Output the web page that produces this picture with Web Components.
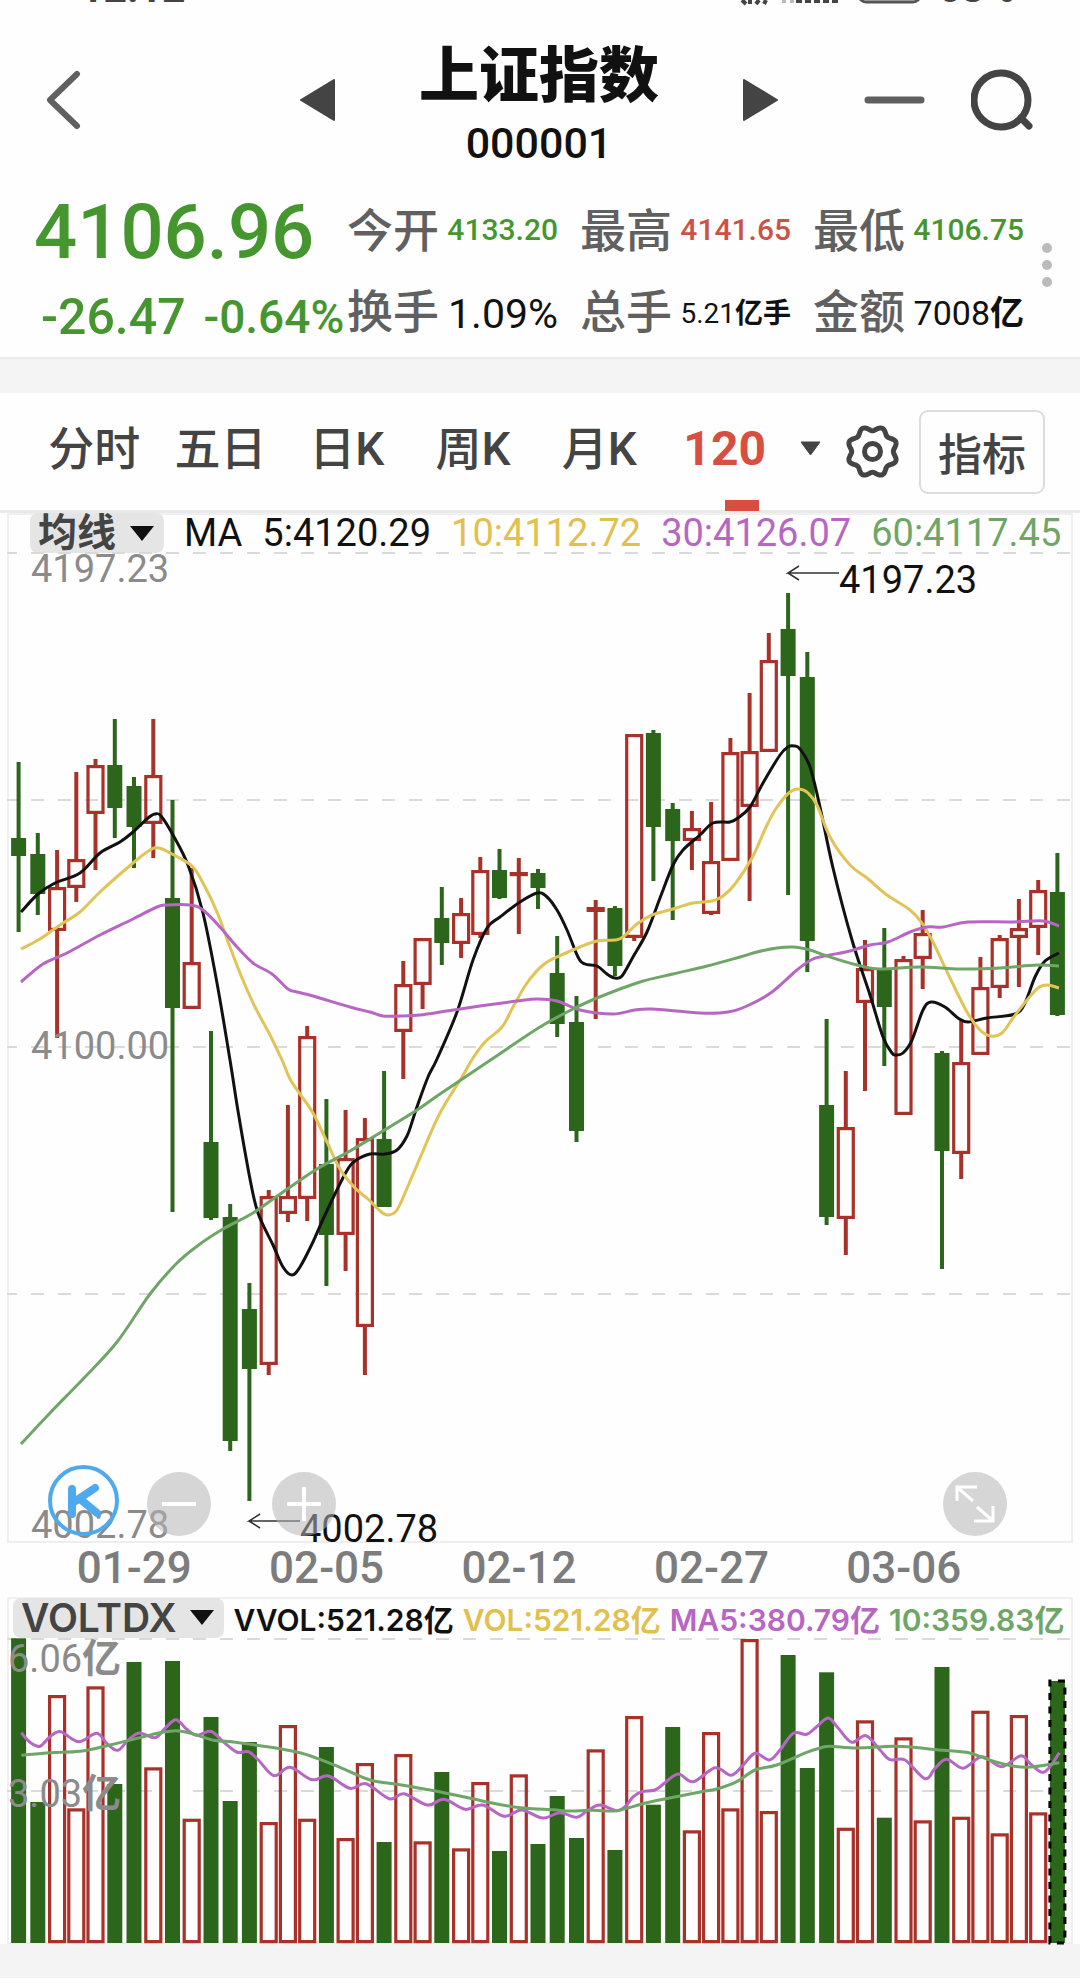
<!DOCTYPE html>
<html lang="zh-CN">
<head>
<meta charset="utf-8">
<meta name="viewport" content="width=device-width, initial-scale=1">
<title>上证指数 000001</title>
<style>
  body { margin: 0; background: #fefefe; color: #111; font-family: Roboto, "Noto Sans CJK SC", sans-serif; }
</style>
</head>
<body>
<stock-page></stock-page>

<script>
const UP = '#a8322a', DOWN = '#2c661b', GRID = '#dadada';
const BUTTON_RESET = `button { border: 0; padding: 0; margin: 0; background: none; color: inherit; font: inherit; cursor: pointer; } svg { display: block; } * { box-sizing: border-box; }`;

function define(name, html, after) {
  const tpl = document.createElement('template');
  tpl.innerHTML = html;
  customElements.define(name, class extends HTMLElement {
    constructor() {
      super();
      this.attachShadow({ mode: 'open' }).append(tpl.content.cloneNode(true));
    }
    connectedCallback() { if (after) after(this.shadowRoot, this); }
  });
}

/* Catmull-Rom spline through a list of points */
function spline(p) {
  let d = `M${p[0][0]} ${p[0][1]}`;
  for (let i = 0; i < p.length - 1; i++) {
    const a = p[i - 1] || p[i], b = p[i], c = p[i + 1], e = p[i + 2] || c;
    const n = v => v.toFixed(1);
    d += `C${n(b[0] + (c[0] - a[0]) / 6)} ${n(b[1] + (c[1] - a[1]) / 6)} ${n(c[0] - (e[0] - b[0]) / 6)} ${n(c[1] - (e[1] - b[1]) / 6)} ${c[0]} ${c[1]}`;
  }
  return d;
}
const pairs = s => s.trim().split(/\s+/).map(t => t.split(',').map(Number));
const slotX = i => +(18.6 + 19.237 * i).toFixed(1);
const curve = (pts, color) => `<path d="${spline(pts)}" fill="none" stroke="${color}" stroke-width="3"/>`;
const gridLine = y => `<path d="M7 ${y}H1070" stroke="${GRID}" stroke-width="2" stroke-dasharray="13 14" stroke-dashoffset="3"/>`;

define('status-bar', `
<style>
  :host { display: flex; justify-content: space-between; align-items: flex-end; height: 6px; overflow: hidden; padding: 0 65px 0 80px; color: #444; font: 700 41px/36px Roboto, sans-serif; }
  .right { display: flex; align-items: flex-end; gap: 16px; }
  svg { display: block; }
</style>
<span>12:12</span>
<span class="right">
  <svg width="182" height="46" viewBox="0 0 182 46" aria-hidden="true">
    <path d="M2 40l4 4M10 40v4M16 44l3-4M24 44l2-4" stroke="#444" stroke-width="4"/>
    <path d="M44 40v3M52 40v3" stroke="#bbb" stroke-width="4"/>
    <path d="M59 30v13M68 28v15M77 26v17M86 24v19M95 22v21" stroke="#444" stroke-width="6"/>
    <rect x="119" y="14" width="61" height="28" rx="7" fill="#ddd" stroke="#555" stroke-width="3"/>
  </svg>
  <span>63%</span>
</span>`);

define('title-bar', `
<style>
  ${BUTTON_RESET}
  :host { display: grid; grid-template-columns: 1fr auto 1fr; gap: 84px; align-items: center; padding: 22px 47px 0 45px; }
  .side { display: flex; align-items: center; justify-content: space-between; }
  .right { justify-content: flex-start; gap: 46px; }
  .right .minus { margin-left: auto; }
  h1 { margin: 0; padding-top: 7px; font: 900 60px/72px "Noto Sans CJK SC", sans-serif; text-align: center; }
  p { margin: 7px 0 0; font: 500 43px/58px Roboto, sans-serif; text-align: center; }
</style>
<div class="side">
  <button aria-label="返回"><svg width="36" height="60" viewBox="0 0 36 60"><path d="M32 4L5 30l27 26" fill="none" stroke="#606060" stroke-width="6" stroke-linecap="round" stroke-linejoin="round"/></svg></button>
  <button aria-label="上一个"><svg width="35" height="42" viewBox="0 0 35 42"><path d="M34 1v40L1 21z" fill="#444" stroke="#444" stroke-linejoin="round" stroke-width="2"/></svg></button>
</div>
<div><h1>上证指数</h1><p>000001</p></div>
<div class="side right">
  <button aria-label="下一个"><svg width="35" height="42" viewBox="0 0 35 42"><path d="M1 1v40l33-20z" fill="#444" stroke="#444" stroke-linejoin="round" stroke-width="2"/></svg></button>
  <button class="minus" aria-label="删除自选"><svg width="61" height="60" viewBox="0 0 61 60"><path d="M4 30h53" stroke="#606060" stroke-width="7" stroke-linecap="round"/></svg></button>
  <button aria-label="搜索"><svg width="62" height="62" viewBox="0 0 62 62"><circle cx="30" cy="31" r="27" fill="none" stroke="#444" stroke-width="7"/><path d="M50 49l8 8" stroke="#444" stroke-width="7" stroke-linecap="round"/></svg></button>
</div>`);

define('quote-stat', `
<style>
  :host { display: flex; justify-content: space-between; align-items: center; white-space: nowrap; }
  .label { padding-bottom: 6px; color: #606060; font: 500 46px/60px "Noto Sans CJK SC", sans-serif; }
</style>
<span class="label"><slot name="label"></slot></span><slot></slot>`);

define('quote-panel', `
<style>
  ${BUTTON_RESET}
  :host { display: grid; grid-template-columns: 347px 1fr auto; align-items: center; padding: 17px 24px 6px 0; border-bottom: 2px solid #eaeaea; }
  .now, .stats { display: grid; grid-auto-rows: 81px; align-items: center; }
  .now { color: #45962f; font-weight: 500; white-space: nowrap; }
  .price { padding: 4px 0 0 34px; font-size: 76px; line-height: 80px; }
  .change { display: flex; align-items: center; gap: 18px; padding: 12px 0 0 41px; font-size: 50px; line-height: 60px; }
  .pct { font-size: 46px; }
  .stats { grid-template-columns: repeat(3, 1fr); column-gap: 22px; }
  .s { font-size: 30px; } .m { font-size: 34px; } .l { padding-top: 6px; font-size: 41px; } .xs { font-size: 28px; }
  b { font-family: "Noto Sans CJK SC", sans-serif; }
  .g { color: #45962f; font-weight: 500; } .r { color: #cc5246; font-weight: 500; }
  .more { padding: 0 0 10px 18px; }
</style>
<div class="now">
  <div class="price">4106.96</div>
  <div class="change"><span>-26.47</span><span class="pct">-0.64%</span></div>
</div>
<div class="stats">
  <quote-stat><span slot="label">今开</span><span class="s g">4133.20</span></quote-stat>
  <quote-stat><span slot="label">最高</span><span class="s r">4141.65</span></quote-stat>
  <quote-stat><span slot="label">最低</span><span class="s g">4106.75</span></quote-stat>
  <quote-stat><span slot="label">换手</span><span class="l">1.09%</span></quote-stat>
  <quote-stat><span slot="label">总手</span><span class="xs">5.21<b>亿手</b></span></quote-stat>
  <quote-stat><span slot="label">金额</span><span class="m">7008<b>亿</b></span></quote-stat>
</div>
<button class="more" aria-label="更多"><svg width="14" height="46" viewBox="0 0 14 46" fill="#bbb"><circle cx="5" cy="6" r="5"/><circle cx="5" cy="23" r="5"/><circle cx="5" cy="40" r="5"/></svg></button>`);

define('period-tabs', `
<style>
  ${BUTTON_RESET}
  :host { display: flex; align-items: stretch; height: 117px; padding: 0 35px 0 31px; border-bottom: 3px solid #e9e9e9; color: #444; }
  nav { display: flex; flex: 1; }
  nav button { flex: 126; display: flex; justify-content: center; align-items: center; padding-bottom: 6px; white-space: nowrap; font: 500 46px/60px Roboto, "Noto Sans CJK SC", sans-serif; }
  nav .on { flex: 158; position: relative; justify-content: flex-end; gap: 34px; color: #d94f3f; font-weight: 700; font-size: 48px; }
  nav .on::after { content: ""; position: absolute; left: 50%; bottom: -1px; width: 34px; height: 11px; margin-left: -17px; background: #d94f3f; }
  .gear { padding: 0 19px 0 24px; }
  .index { align-self: center; height: 84px; padding: 0 17px; border: 2px solid #dcdcdc; border-radius: 9px; font: 500 44px/60px "Noto Sans CJK SC", sans-serif; }
</style>
<nav aria-label="周期">
  <button>分时</button><button>五日</button><button>日K</button><button>周K</button><button>月K</button>
  <button class="on"><span>120</span><svg width="21" height="15" viewBox="0 0 21 15"><path d="M1 1h19L10.500 14z" fill="#444" stroke="#444" stroke-linejoin="round"/></svg></button>
</nav>
<button class="gear" aria-label="设置"><svg width="55" height="55" viewBox="-27.500 -27.500 55 55" fill="none" stroke="#444" stroke-width="5" stroke-linejoin="round"><path class="rim"/><circle r="8"/></svg></button>
<button class="index">指标</button>`, root => {
  const pts = [];
  for (let a = 0; a <= 360; a += 5) {
    const t = a * Math.PI / 180, r = 23 - 2.2 * Math.cos(8 * t);
    pts.push([+(r * Math.cos(t)).toFixed(2), +(r * Math.sin(t)).toFixed(2)]);
  }
  root.querySelector('.rim').setAttribute('d', spline(pts) + 'Z');
});

define('indicator-picker', `
<style>
  ${BUTTON_RESET}
  :host { display: block; flex: none; }
  button { display: flex; align-items: center; gap: 14px; height: 40px; padding: 0 10px 0 8px; border-radius: 8px; background: #e5e5e5; color: #444; overflow: hidden; white-space: nowrap; line-height: 40px; }
</style>
<button aria-haspopup="listbox"><slot></slot><svg width="24" height="15" viewBox="0 0 24 15"><path d="M0 0h24L12 15z" fill="#111"/></svg></button>`);

define('price-chart', `
<style>
  ${BUTTON_RESET}
  :host { display: block; position: relative; margin: 0 7px; box-shadow: inset 0 0 0 2px #f0f0f0; }
  .legend { display: flex; align-items: center; gap: 20px; height: 40px; padding: 0 10px 0 23px; font-size: 38px; line-height: 40px; white-space: nowrap; }
  .legend b { padding-bottom: 8px; font: 700 39px/40px "Noto Sans CJK SC", sans-serif; }
  .y { color: #e2c04f; } .p { color: #b866c4; } .g { color: #6fa667; }
  .plot { width: 100%; overflow: visible; font-size: 38px; }
  .tool { position: absolute; bottom: 7px; }
</style>
<div class="legend"><indicator-picker><b>均线</b></indicator-picker><span>MA</span><span>5:4120.29</span><span class="y">10:4112.72</span><span class="p">30:4126.07</span><span class="g">60:4117.45</span></div>
<svg class="plot" viewBox="7 553 1066 990"></svg>
<button class="tool" style="left:3.8%" aria-label="K线"><svg width="71" height="71" viewBox="0 0 71 71" fill="none" stroke="#4fa9ee"><circle cx="35.500" cy="35.500" r="33.500" stroke-width="4"/><path d="M24 24v25M47 23L26 37M32 34l17 14" stroke-width="8" stroke-linecap="round"/></svg></button>
<button class="tool" style="left:13.1%" aria-label="缩小"><svg width="64" height="64" viewBox="0 0 64 64"><circle cx="32" cy="32" r="32" fill="#b4b4b4" opacity=".55"/><path d="M15 32h34" stroke="#fff" stroke-width="4"/></svg></button>
<button class="tool" style="left:24.9%" aria-label="放大"><svg width="64" height="64" viewBox="0 0 64 64"><circle cx="32" cy="32" r="32" fill="#b4b4b4" opacity=".55"/><path d="M15 32h34M32 15v34" stroke="#fff" stroke-width="4"/></svg></button>
<button class="tool" style="left:87.8%" aria-label="全屏"><svg width="64" height="64" viewBox="0 0 64 64"><circle cx="32" cy="32" r="32" fill="#b4b4b4" opacity=".55"/><path d="M14 29V15h20M15 16l15 13M50 34v15H31M49 48L34 35" fill="none" stroke="#fff" stroke-width="3"/></svg></button>`, root => {
  /* colour, high, body top, body bottom, low */
  const candles = `G,762,838,856,932 G,833,854,894,915 R,850,887,931,1038 R,772,859,888,902 R,759,765,814,870 G,719,765,808,838 G,777,786,827,868 R,719,775,824,858 G,800,898,1008,1212 R,868,962,1009,1009
    G,1031,1142,1218,1220 G,1204,1217,1441,1451 G,1283,1309,1369,1501 R,1190,1196,1365,1375 R,1105,1196,1214,1222 R,1026,1036,1199,1221 G,1099,1164,1235,1286 R,1110,1158,1235,1271 R,1118,1138,1327,1375 G,1071,1139,1207,1207
    R,961,984,1032,1079 R,938,938,985,1009 G,887,918,943,965 R,898,913,944,958 R,857,870,935,938 G,849,870,898,899 R,858,872,876,934 G,869,873,888,909 G,936,973,1024,1037 G,996,1022,1131,1142
    R,900,907,912,1019 G,906,908,966,976 R,734,734,938,941 G,730,733,827,881 G,803,809,841,920 R,811,828,841,870 R,802,861,914,915 R,738,752,861,861 R,693,751,807,901 R,633,660,752,752
    G,593,629,676,895 G,652,677,941,972 G,1019,1105,1217,1225 R,1071,1127,1219,1255 R,940,968,1003,1091 G,928,968,1007,1066 R,956,959,1115,1115 R,910,933,959,989 G,1051,1053,1151,1269 R,1019,1062,1154,1179
    R,957,987,1055,1055 R,935,938,988,998 R,899,928,938,987 R,880,890,928,955 G,853,892,1015,1016`.trim().split(/\s+/);
  let s = [553, 800, 1047, 1294].map(gridLine).join('');
  s += '<path d="M7 1542H1073" stroke="#eee" stroke-width="2"/>';
  candles.forEach((row, i) => {
    const [k, ...v] = row.split(','), [hi, top, bot, lo] = v.map(Number), x = slotX(i), c = k === 'R' ? UP : DOWN;
    s += `<path d="M${x} ${hi}V${top}M${x} ${bot}V${lo}" stroke="${c}" stroke-width="4"/>`;
    s += k === 'G' ? `<rect x="${x - 7.5}" y="${top}" width="15" height="${bot - top}" fill="${c}"/>`
      : `<rect x="${x - 7.5}" y="${top + 1.6}" width="15" height="${Math.max(bot - top - 3.2, 1)}" fill="none" stroke="${c}" stroke-width="3.2"/>`;
  });
  s += curve(pairs(`21,912 38,894 55,883 80,873 100,853 120,842 133,832 148,818 155,814 161,816 173,835 188,865 203,913 217,983 230,1060 238,1111 250,1179 258,1213 273,1245 283,1267 292,1275 300,1267 312,1244 325,1215 345,1174 355,1161 370,1154 385,1154 397,1150 407,1136 413,1119 418,1104 428,1077 437,1059 457,1012 473,960 487,928 500,917 520,902 537,893 546,896 557,910 567,930 578,957 585,964 597,966 607,974 615,978 622,976 633,957 647,932 660,898 673,865 683,850 700,835 713,823 730,822 738,818 750,807 763,783 780,755 788,747 794,746 800,749 810,767 820,807 833,868 852,940 870,995 883,1037 892,1053 896,1055 903,1053 912,1040 923,1010 931,1002 945,1007 958,1018 968,1022 987,1018 1015,1014 1025,1003 1035,977 1045,961 1059,953`), '#111');
  s += curve(pairs(`21,949 40,939 60,925 80,912 100,892 133,863 150,850 159,848 172,854 192,866 203,883 217,912 230,947 242,978 255,1007 270,1035 282,1060 290,1079 300,1094 313,1113 327,1142 340,1169 355,1188 368,1199 380,1211 388,1215 397,1210 408,1186 423,1151 440,1113 462,1077 473,1058 485,1042 502,1027 513,1007 527,983 543,965 557,957 580,947 597,941 615,940 623,937 637,924 652,915 673,909 693,903 712,901 723,896 735,884 752,858 767,825 777,807 790,792 799,789 808,793 817,805 830,837 850,865 867,878 887,895 910,910 922,923 933,942 950,978 967,1012 980,1030 991,1036 1002,1033 1013,1018 1027,1000 1038,988 1047,985 1059,988`), '#e0c458');
  s += curve(pairs(`21,982 43,964 67,953 100,935 133,919 157,907 167,905 190,905 203,910 220,927 237,947 253,963 272,974 288,989 297,992 313,996 350,1007 370,1012 383,1016 400,1016 420,1015 447,1011 480,1006 517,1001 537,999 557,1001 580,1010 613,1014 635,1010 652,1009 700,1013 728,1012 747,1006 772,992 797,970 813,959 830,955 850,951 870,945 888,942 910,932 927,927 943,927 968,922 1013,922 1043,921 1059,926`), '#b866c4');
  s += curve(pairs(`21,1444 50,1413 83,1379 117,1342 150,1294 177,1263 200,1244 223,1229 253,1213 283,1192 317,1169 350,1151 383,1131 417,1110 440,1094 492,1059 540,1027 573,1009 597,998 640,982 673,974 707,966 740,957 757,952 777,948 793,947 810,950 827,956 857,965 880,969 920,967 960,969 1000,968 1037,965 1059,966`), '#6fa667');
  s += `<g fill="#8b8b8b"><text x="31" y="582">4197.23</text><text x="31" y="1059">4100.00</text><text x="31" y="1538">4002.78</text></g>
    <g fill="#111"><text x="839" y="593">4197.23</text><text x="300" y="1542">4002.78</text></g>
    <path d="M839 573H788l11-7M788 573l11 7M300 1521H249l11-7M249 1521l11 7" fill="none" stroke="#333" stroke-width="1.500"/>`;
  root.querySelector('.plot').innerHTML = s;
});

define('date-axis', `
<style>
  :host { display: flex; margin: 0 7px; padding: 0 73px 3px 31px; color: #7c7c7c; font: 500 44px/51px Roboto, sans-serif; }
  span { flex: 1; text-align: center; }
</style>
<span>01-29</span><span>02-05</span><span>02-12</span><span>02-27</span><span>03-06</span>`);

define('volume-chart', `
<style>
  * { box-sizing: border-box; }
  :host { display: block; margin: 0 7px; box-shadow: inset 0 0 0 2px #f0f0f0; }
  .legend { display: flex; align-items: center; gap: 9px; height: 41px; padding: 0 6px; font: 600 30px/40px Inter, "Noto Sans CJK SC", sans-serif; white-space: nowrap; }
  .legend > span { padding-top: 4px; }
  .legend b { font: 600 39px/40px Inter, sans-serif; }
  .y { color: #e2c04f; } .p { color: #b866c4; } .g { color: #6fa667; }
  .plot { display: block; width: 100%; font-size: 38px; overflow: visible; }
  tspan { font: 700 39px "Noto Sans CJK SC", sans-serif; }
</style>
<div class="legend"><indicator-picker><b>VOLTDX</b></indicator-picker><span>VVOL:521.28亿</span><span class="y">VOL:521.28亿</span><span class="p">MA5:380.79亿</span><span class="g">10:359.83亿</span></div>
<svg class="plot" viewBox="7 1638 1066 306"></svg>`, root => {
  const bars = `G175 G666 R345 R685 R319 G612 G246 R562 G243 R716 G411 G663 G486 R726 R435 R716 G501 R774 R549 G786 R522 R784 G576 R805 R606 G813 R583 G792 G648 G774 R508 G810 R408 G674 G441 R751 R456 R685 R177 R693 G225 G564 G277 R743 R421 G713 R472 R721 G261 R710 R392 R760 R405 R697 G303`.split(' ');
  const y = v => +(1580 + v / 3).toFixed(1), base = 1943;
  let s = gridLine(1639) + gridLine(1791) + '<path d="M7 1943H1073" stroke="#eee" stroke-width="2"/>';
  bars.forEach((b, i) => {
    const top = y(+b.slice(1)), x = slotX(i);
    s += b[0] === 'G' ? `<rect x="${x - 7.5}" y="${top}" width="15" height="${base - top}" fill="${DOWN}"/>`
      : `<rect x="${x - 7.5}" y="${top + 1.6}" width="15" height="${base - top - 3}" fill="none" stroke="${UP}" stroke-width="3.2"/>`;
    if (i === bars.length - 1) s += `<path d="M${x - 7.5} ${base}V${top}H${x + 7.5}V${base}Z" fill="none" stroke="#000" stroke-width="3" stroke-dasharray="7 6.500"/>`;
  });
  const scaled = str => pairs(str).map(([a, b]) => [+(a / 3).toFixed(1), y(b)]);
  s += curve(scaled(`64,458 90,487 120,499 150,470 182,455 235,485 290,460 320,490 353,511 385,480 418,459 465,473 495,445 528,419 560,448 590,466 632,454 670,485 710,516 745,515 775,540 822,587 870,562 935,599 985,588 1050,625 1098,611 1168,656 1212,641 1282,675 1332,658 1395,688 1448,675 1512,709 1565,690 1628,714 1680,698 1730,712 1765,690 1800,675 1850,692 1875,680 1900,650 1925,635 1965,630 1995,608 2035,582 2080,605 2145,563 2192,586 2225,560 2265,520 2308,540 2340,510 2380,460 2420,463 2450,440 2485,414 2515,445 2555,487 2598,467 2640,510 2670,539 2715,540 2775,596 2805,565 2840,538 2890,565 2945,530 3005,560 3062,527 3090,550 3125,577 3150,560 3178,518`), '#b866c4');
  s += curve(scaled(`64,526 150,518 240,514 330,495 430,470 480,458 530,452 580,462 640,481 700,486 780,497 860,510 930,527 1020,562 1110,600 1200,614 1290,630 1390,650 1480,670 1560,683 1660,689 1700,693 1780,691 1850,692 1940,668 2020,652 2100,636 2150,627 2210,605 2265,570 2330,555 2420,517 2460,504 2490,499 2570,504 2680,499 2742,502 2810,509 2900,517 2960,537 3020,554 3080,562 3178,548`), '#6fa667');
  s += `<g fill="#8b8b8b"><text x="8" y="1672">6.06<tspan>亿</tspan></text><text x="8" y="1807">3.03<tspan>亿</tspan></text></g>`;
  root.querySelector('.plot').innerHTML = s;
});

define('stock-page', `
<style>
  :host { display: block; }
  .band { height: 34px; background: #f4f4f4; }
</style>
<status-bar></status-bar>
<title-bar></title-bar>
<quote-panel></quote-panel>
<div class="band"></div>
<period-tabs></period-tabs>
<price-chart></price-chart>
<date-axis></date-axis>
<volume-chart></volume-chart>
<div class="band"></div>`);
</script>
</body>
</html>
